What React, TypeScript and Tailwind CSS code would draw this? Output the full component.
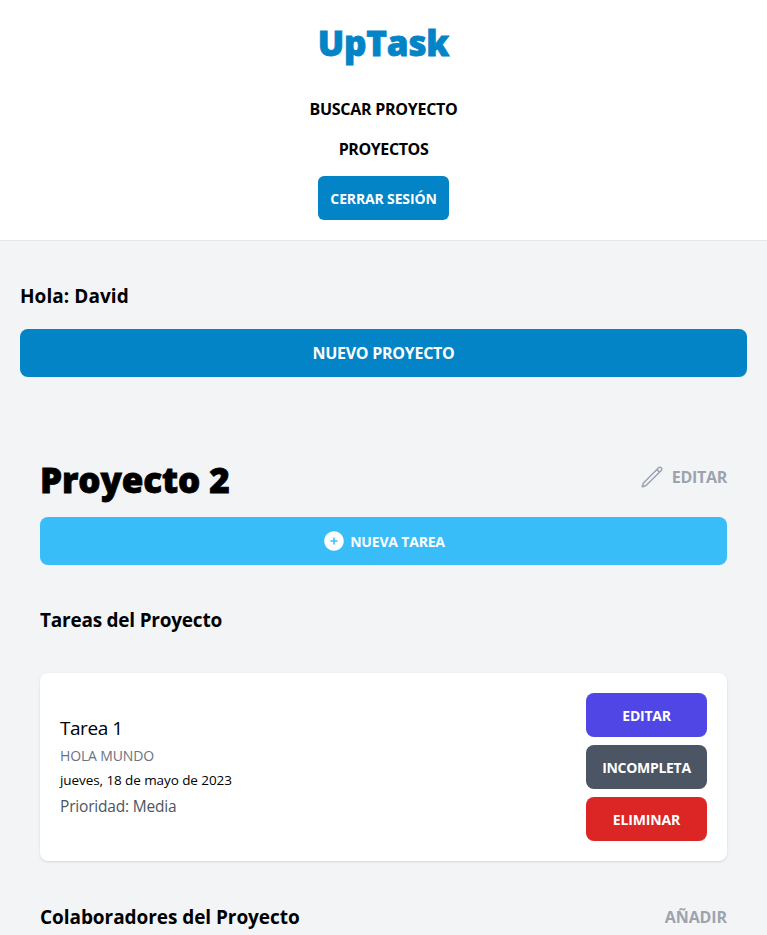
import React from "react";

const button = "rounded-lg font-bold uppercase text-white";

export default function App() {
  return (
    <div className="h-[935px] overflow-hidden bg-gray-100 font-['Open_Sans','Noto_Sans',sans-serif] text-black">
      <header className="h-[241px] border-b border-gray-200 bg-white px-4 py-5 text-center">
        <h2 className="mb-8 text-[35px] leading-[45px] font-black tracking-[-0.2px] text-[#0284c7] [-webkit-text-stroke:0.8px_#0284c7]">UpTask</h2>
        <nav className="flex flex-col items-center gap-4">
          <button className="h-6 font-bold uppercase leading-6 tracking-[-0.27px]">Buscar Proyecto</button>
          <a className="h-6 font-bold uppercase leading-6 tracking-[-0.4px]">Proyectos</a>
          <button className="-mt-px h-11 w-[131px] rounded-md bg-[#0284c7] pt-0.5 text-sm font-bold uppercase text-white tracking-[-0.15px]">Cerrar Sesión</button>
        </nav>
      </header>
      <div>
        <aside className="px-5 pt-[41px]">
          <p className="text-[19px] leading-7 font-bold tracking-[0.06px]">Hola: David</p>
          <button className={`${button} mt-[19px] block h-12 w-full bg-[#0284c7] tracking-[-0.27px]`}>Nuevo Proyecto</button>
        </aside>
        <main className="px-10 pt-20">
          <div className="flex items-center justify-between">
            <h1 className="h-10 pt-[3px] text-[35px] leading-10 font-black tracking-[-0.1px] [-webkit-text-stroke:0.8px_black]">Proyecto 2</h1>
            <a className="flex items-center gap-2 font-bold uppercase tracking-[-0.3px] text-[#9ca3af]">
              <svg className="size-6" fill="none" viewBox="0 0 24 24" stroke="currentColor" strokeWidth="1.5"><path strokeLinecap="round" strokeLinejoin="round" d="M16.862 4.487l1.687-1.688a1.875 1.875 0 112.652 2.652L6.832 19.82a4.5 4.5 0 01-1.897 1.13l-2.685.8.8-2.685a4.5 4.5 0 011.13-1.897L16.863 4.487zm0 0L19.5 7.125" /></svg>Editar
            </a>
          </div>
          <button className={`${button} mt-5 flex h-12 w-full items-center justify-center gap-1 bg-[#38bdf8] text-sm tracking-[-0.18px]`}>
            <svg className="size-6" viewBox="0 0 24 24" fill="currentColor"><path fillRule="evenodd" d="M12 2.25c-5.385 0-9.75 4.365-9.75 9.75s4.365 9.75 9.75 9.75 9.75-4.365 9.75-9.75S17.385 2.25 12 2.25zM12.75 9a.75.75 0 00-1.5 0v2.25H9a.75.75 0 000 1.5h2.25V15a.75.75 0 001.5 0v-2.25H15a.75.75 0 000-1.5h-2.25V9z" clipRule="evenodd" /></svg>
            <span className="pt-0.5">Nueva Tarea</span>
          </button>
          <p className="mt-[41px] text-[19px] leading-7 font-bold tracking-[-0.23px]">Tareas del Proyecto</p>
          <section className="mt-[39px] flex h-[188px] items-center justify-between rounded-lg bg-white p-5 shadow-sm">
            <div className="pt-px">
              <p className="mb-1 text-[19px] leading-7 tracking-[-0.45px]">Tarea 1</p>
              <p className="mb-1 text-sm uppercase tracking-[-0.15px] text-[#6b7280]">Hola Mundo</p>
              <p className="mb-1 text-[13.5px] leading-5 tracking-[-0.08px]">jueves, 18 de mayo de 2023</p>
              <p className="mb-1 text-[15.5px] leading-6 tracking-[-0.19px] text-[#4b5563]">Prioridad: Media</p>
            </div>
            <div className="flex w-[121px] flex-col gap-2">
              <button className={`${button} h-11 bg-[#4f46e5] pt-0.5 text-sm tracking-[-0.25px]`}>Editar</button>
              <button className={`${button} h-11 bg-[#4b5563] pt-0.5 text-sm tracking-[-0.3px]`}>Incompleta</button>
              <button className={`${button} h-11 bg-[#dc2626] pt-0.5 text-sm tracking-[-0.15px]`}>Eliminar</button>
            </div>
          </section>
          <div className="mt-[42px] flex items-center justify-between">
            <p className="text-[19px] leading-7 font-bold tracking-[-0.06px]">Colaboradores del Proyecto</p>
            <a className="font-bold uppercase tracking-[-0.1px] text-[#9ca3af]">Añadir</a>
          </div>
        </main>
      </div>
    </div>
  );
}
